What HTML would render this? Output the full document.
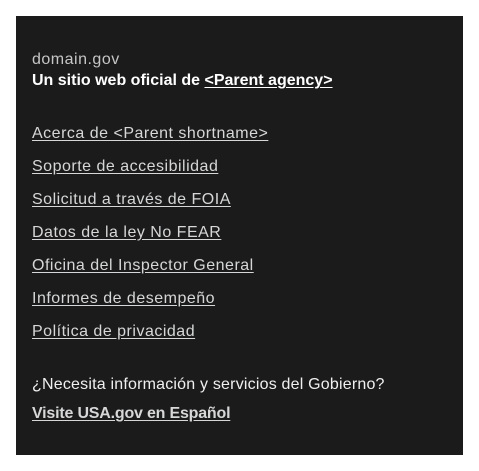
<!DOCTYPE html>
<html><head><meta charset="utf-8"><style>
html,body{margin:0;padding:0;background:#fff;width:479px;height:471px;overflow:hidden}
.box{position:absolute;left:16px;top:16px;width:447px;height:439px;background:#1b1b1b;font-family:"Liberation Sans","Open Sans",sans-serif;font-size:16px;color:#dfe1e2}
.t{position:absolute;left:16px;white-space:nowrap;line-height:20px;letter-spacing:0.5px}
a{color:#d6d7d8;text-decoration:underline;text-underline-offset:2px}
.g{color:#c6c6c6}
.b{font-weight:bold;color:#fff;letter-spacing:0}
.b a{color:#fff}
</style></head><body><div class="box">
<div class="t g" style="top:34px">domain.gov</div>
<div class="t b" style="top:55px">Un sitio web oficial de <a>&lt;Parent agency&gt;</a></div>
<div class="t" style="top:108px"><a>Acerca de &lt;Parent shortname&gt;</a></div>
<div class="t" style="top:141px"><a>Soporte de accesibilidad</a></div>
<div class="t" style="top:174px"><a>Solicitud a través de FOIA</a></div>
<div class="t" style="top:207px"><a>Datos de la ley No FEAR</a></div>
<div class="t" style="top:240px"><a>Oficina del Inspector General</a></div>
<div class="t" style="top:273px"><a>Informes de desempeño</a></div>
<div class="t" style="top:306px"><a>Política de privacidad</a></div>
<div class="t" style="top:359px;color:#f0f0f0;letter-spacing:0.2px">¿Necesita información y servicios del Gobierno?</div>
<div class="t" style="top:388px;font-weight:bold;letter-spacing:-0.2px"><a>Visite USA.gov en Español</a></div>
</div></body></html>
